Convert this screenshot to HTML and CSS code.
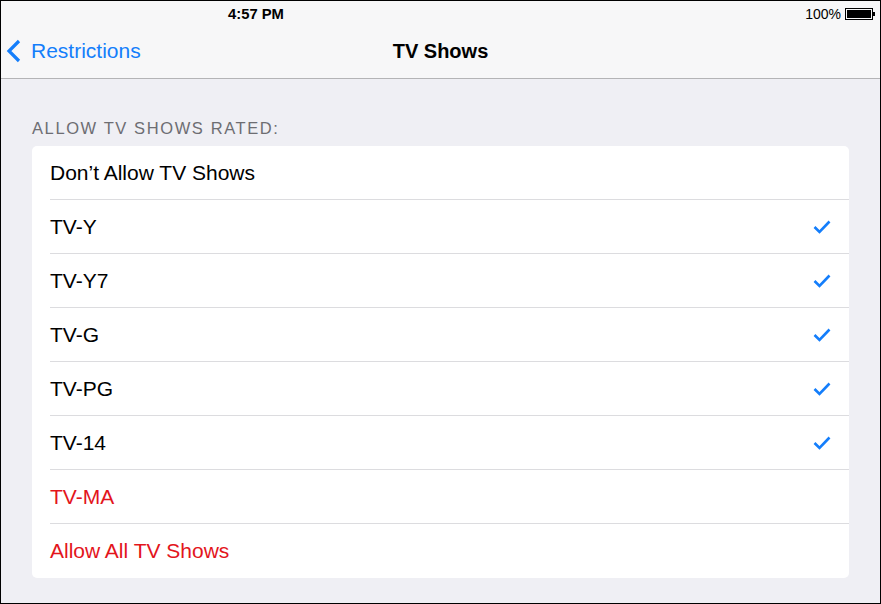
FILE: index.html
```html
<!DOCTYPE html>
<html>
<head>
<meta charset="utf-8">
<link rel="stylesheet" href="styles.css">
</head>
<body>
<div class="frame">
  <header class="topbar">
    <div class="status">
      <span class="time">4:57 PM</span>
      <span class="battery-wrap">
        <span class="pct">100%</span>
        <svg class="battery" width="32" height="14" viewBox="0 0 32 14">
          <rect x="0.5" y="1.5" width="27" height="11" fill="none" stroke="#000" stroke-width="1"/>
          <rect x="2" y="3" width="24" height="8" fill="#000"/>
          <rect x="28" y="5" width="2" height="4" fill="#000"/>
        </svg>
      </span>
    </div>
    <nav class="navbar">
      <a class="back">
        <svg class="chevron" width="16" height="24" viewBox="0 0 16 24">
          <path d="M13 2 L3 12 L13 22" fill="none" stroke="#147efb" stroke-width="3.2" stroke-linecap="butt" stroke-linejoin="miter"/>
        </svg>
        <span class="back-label">Restrictions</span>
      </a>
      <h1 class="title">TV Shows</h1>
    </nav>
  </header>
  <main class="content">
    <div class="section-header">ALLOW TV SHOWS RATED:</div>
    <ul class="list">
      <li class="row"><span>Don’t Allow TV Shows</span></li>
      <li class="row"><span>TV-Y</span><svg class="check" viewBox="0 0 18 14"><path d="M1.5 7 L6.5 12 L16.5 1.5" fill="none" stroke="#147efb" stroke-width="2.6"/></svg></li>
      <li class="row"><span>TV-Y7</span><svg class="check" viewBox="0 0 18 14"><path d="M1.5 7 L6.5 12 L16.5 1.5" fill="none" stroke="#147efb" stroke-width="2.6"/></svg></li>
      <li class="row"><span>TV-G</span><svg class="check" viewBox="0 0 18 14"><path d="M1.5 7 L6.5 12 L16.5 1.5" fill="none" stroke="#147efb" stroke-width="2.6"/></svg></li>
      <li class="row"><span>TV-PG</span><svg class="check" viewBox="0 0 18 14"><path d="M1.5 7 L6.5 12 L16.5 1.5" fill="none" stroke="#147efb" stroke-width="2.6"/></svg></li>
      <li class="row"><span>TV-14</span><svg class="check" viewBox="0 0 18 14"><path d="M1.5 7 L6.5 12 L16.5 1.5" fill="none" stroke="#147efb" stroke-width="2.6"/></svg></li>
      <li class="row red"><span>TV-MA</span></li>
      <li class="row red"><span>Allow All TV Shows</span></li>
    </ul>
  </main>
</div>
</body>
</html>
```
FILE: styles.css
```css
* { box-sizing: border-box; }
html, body { margin: 0; padding: 0; }
body {
  font-family: "Liberation Sans", Arial, sans-serif;
  background: #000;
}
.frame {
  width: 881px;
  height: 604px;
  border: 1px solid #000;
  background: #efeff4;
  overflow: hidden;
}
.topbar {
  background: #f7f7f8;
  border-bottom: 1px solid #b4b4b6;
  height: 78px;
}
.status {
  height: 23px;
  display: flex;
  align-items: center;
  padding-left: 227px;
  padding-right: 3px;
  font-size: 14px;
  color: #000;
}
.time {
  font-weight: bold;
  font-size: 14.8px;
  flex: 1;
  padding-top: 2px;
}
.battery-wrap {
  display: flex;
  align-items: center;
  gap: 4px;
  padding-top: 2px;
}
.pct { font-size: 14px; }
.navbar {
  position: relative;
  height: 54px;
  display: flex;
  align-items: center;
}
.back {
  display: flex;
  align-items: center;
  padding-left: 5px;
  gap: 9px;
  color: #147efb;
  font-size: 21px;
}
.chevron { display: block; }
.title {
  position: absolute;
  left: 0;
  right: 0;
  top: 0;
  height: 54px;
  margin: 0;
  display: flex;
  align-items: center;
  justify-content: center;
  font-size: 20px;
  font-weight: bold;
  pointer-events: none;
}
.content {
  padding: 40px 31px 0 31px;
}
.section-header {
  font-size: 16.5px;
  letter-spacing: 1.6px;
  color: #6d6d72;
  padding-left: 0;
  height: 27px;
}
.list {
  list-style: none;
  margin: 0;
  padding: 0;
  background: #fff;
  border-radius: 5px;
}
.row {
  height: 54px;
  margin-left: 18px;
  padding-right: 18px;
  display: flex;
  align-items: center;
  justify-content: space-between;
  font-size: 21px;
  color: #000;
  border-bottom: 1px solid #dcdcdf;
}
.row:last-child { border-bottom: none; }
.row.red { color: #e3151c; }
.check {
  width: 18px;
  height: 14px;
  display: block;
}
```
